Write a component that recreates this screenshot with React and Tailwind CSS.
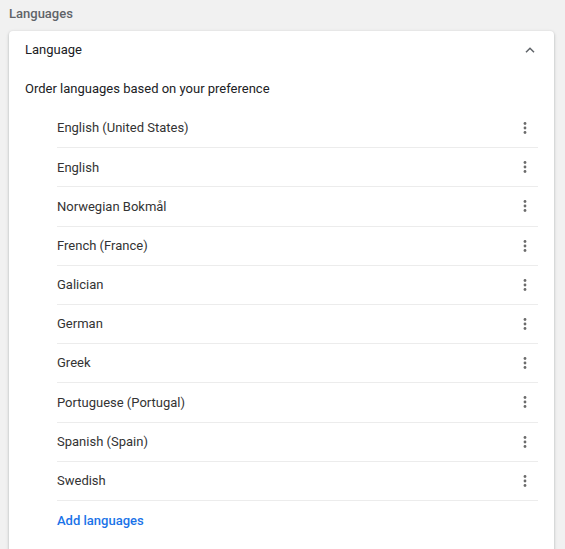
import React from "react";

const languages = [
  "English (United States)",
  "English",
  "Norwegian Bokmål",
  "French (France)",
  "Galician",
  "German",
  "Greek",
  "Portuguese (Portugal)",
  "Spanish (Spain)",
  "Swedish",
];

const MoreIcon = () => (
  <svg width="4" height="14" viewBox="0 0 4 14" className="fill-[#6b6b6b]">
    <circle cx="2" cy="2.5" r="1.4" />
    <circle cx="2" cy="7" r="1.4" />
    <circle cx="2" cy="11.5" r="1.4" />
  </svg>
);

const ChevronUp = () => (
  <svg width="10" height="6" viewBox="0 0 10 6" fill="none" stroke="#5f6368" strokeWidth="1.5">
    <path d="M1 5.2 L5 1.3 L9 5.2" />
  </svg>
);

export default function App() {
  return (
    <div
      className="min-h-screen bg-[#f1f1f1] pl-[9px] pr-[11px] text-[13px] text-[#333]"
      style={{ fontFamily: "Roboto, 'Liberation Sans', sans-serif" }}
    >
      <div className="h-[31px] flex items-start pt-[5px]">
        <h2 className="text-[13px] font-medium text-[#5f6368] leading-[18px]">Languages</h2>
      </div>
      <div className="bg-white rounded-[4px] shadow-[0_1px_2px_rgba(60,64,67,0.25),0_1px_3px_1px_rgba(60,64,67,0.1)] pb-[20px]">
        <div className="h-[37px] flex items-center justify-between pl-[16px] pr-[19px]">
          <span className="text-[#202124]">Language</span>
          <ChevronUp />
        </div>
        <div className="h-[41px] flex items-center pl-[16px] text-[#202124]">
          Order languages based on your preference
        </div>
        <div className="ml-[48px] mr-[16px]">
          {languages.map((lang) => (
            <div
              key={lang}
              className="h-[39.2px] flex items-center justify-between border-b border-[#ececec] pr-[11px]"
            >
              <span>{lang}</span>
              <MoreIcon />
            </div>
          ))}
          <div className="h-[39px] flex items-center">
            <span className="font-medium text-[#1a73e8]">Add languages</span>
          </div>
        </div>
      </div>
    </div>
  );
}
